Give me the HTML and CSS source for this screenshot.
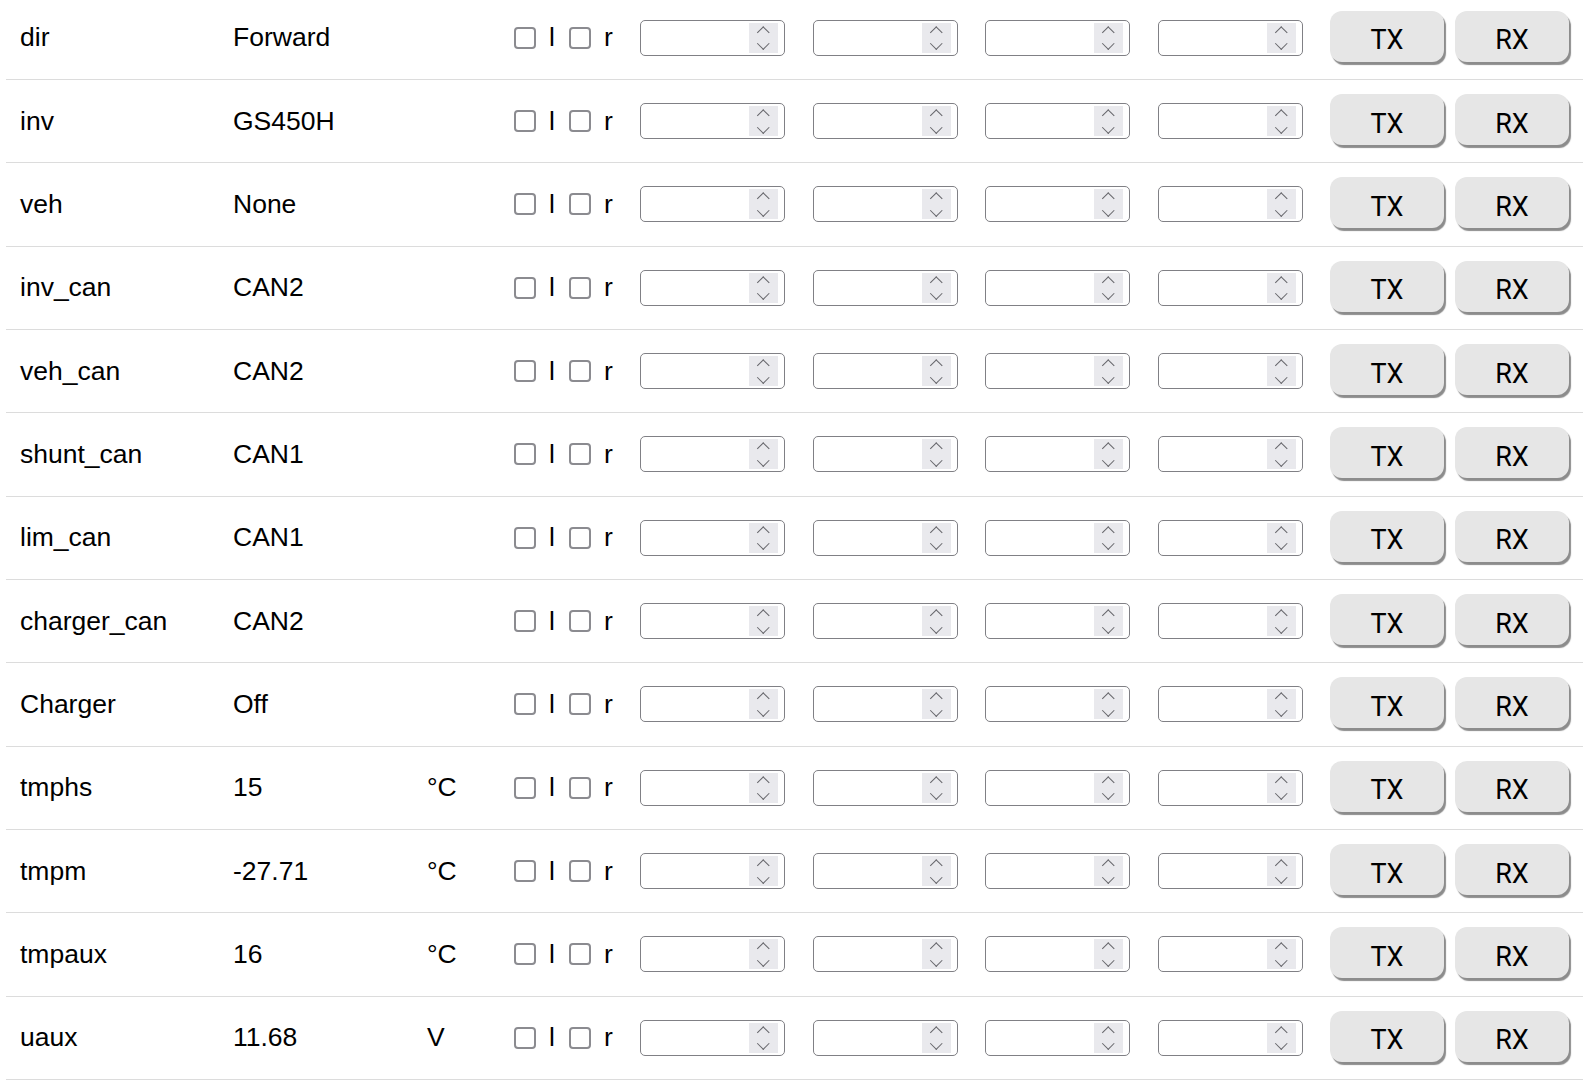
FILE: index.html
```html
<!DOCTYPE html>
<html>
<head>
<meta charset="utf-8">
<link rel="stylesheet" href="styles.css">
</head>
<body>
<div class="table">
  <div class="row"><span class="name">dir</span><span class="value">Forward</span><span class="unit"></span><span class="flags"><input type="checkbox" class="cb"><span class="lab l">l</span><input type="checkbox" class="cb"><span class="lab r">r</span></span><span class="fields"><span class="field"><input class="num"><span class="spin"></span></span><span class="field"><input class="num"><span class="spin"></span></span><span class="field"><input class="num"><span class="spin"></span></span><span class="field"><input class="num"><span class="spin"></span></span></span><span class="btns"><button class="btn">TX</button><button class="btn">RX</button></span></div>
  <div class="row"><span class="name">inv</span><span class="value">GS450H</span><span class="unit"></span><span class="flags"><input type="checkbox" class="cb"><span class="lab l">l</span><input type="checkbox" class="cb"><span class="lab r">r</span></span><span class="fields"><span class="field"><input class="num"><span class="spin"></span></span><span class="field"><input class="num"><span class="spin"></span></span><span class="field"><input class="num"><span class="spin"></span></span><span class="field"><input class="num"><span class="spin"></span></span></span><span class="btns"><button class="btn">TX</button><button class="btn">RX</button></span></div>
  <div class="row"><span class="name">veh</span><span class="value">None</span><span class="unit"></span><span class="flags"><input type="checkbox" class="cb"><span class="lab l">l</span><input type="checkbox" class="cb"><span class="lab r">r</span></span><span class="fields"><span class="field"><input class="num"><span class="spin"></span></span><span class="field"><input class="num"><span class="spin"></span></span><span class="field"><input class="num"><span class="spin"></span></span><span class="field"><input class="num"><span class="spin"></span></span></span><span class="btns"><button class="btn">TX</button><button class="btn">RX</button></span></div>
  <div class="row"><span class="name">inv_can</span><span class="value">CAN2</span><span class="unit"></span><span class="flags"><input type="checkbox" class="cb"><span class="lab l">l</span><input type="checkbox" class="cb"><span class="lab r">r</span></span><span class="fields"><span class="field"><input class="num"><span class="spin"></span></span><span class="field"><input class="num"><span class="spin"></span></span><span class="field"><input class="num"><span class="spin"></span></span><span class="field"><input class="num"><span class="spin"></span></span></span><span class="btns"><button class="btn">TX</button><button class="btn">RX</button></span></div>
  <div class="row"><span class="name">veh_can</span><span class="value">CAN2</span><span class="unit"></span><span class="flags"><input type="checkbox" class="cb"><span class="lab l">l</span><input type="checkbox" class="cb"><span class="lab r">r</span></span><span class="fields"><span class="field"><input class="num"><span class="spin"></span></span><span class="field"><input class="num"><span class="spin"></span></span><span class="field"><input class="num"><span class="spin"></span></span><span class="field"><input class="num"><span class="spin"></span></span></span><span class="btns"><button class="btn">TX</button><button class="btn">RX</button></span></div>
  <div class="row"><span class="name">shunt_can</span><span class="value">CAN1</span><span class="unit"></span><span class="flags"><input type="checkbox" class="cb"><span class="lab l">l</span><input type="checkbox" class="cb"><span class="lab r">r</span></span><span class="fields"><span class="field"><input class="num"><span class="spin"></span></span><span class="field"><input class="num"><span class="spin"></span></span><span class="field"><input class="num"><span class="spin"></span></span><span class="field"><input class="num"><span class="spin"></span></span></span><span class="btns"><button class="btn">TX</button><button class="btn">RX</button></span></div>
  <div class="row"><span class="name">lim_can</span><span class="value">CAN1</span><span class="unit"></span><span class="flags"><input type="checkbox" class="cb"><span class="lab l">l</span><input type="checkbox" class="cb"><span class="lab r">r</span></span><span class="fields"><span class="field"><input class="num"><span class="spin"></span></span><span class="field"><input class="num"><span class="spin"></span></span><span class="field"><input class="num"><span class="spin"></span></span><span class="field"><input class="num"><span class="spin"></span></span></span><span class="btns"><button class="btn">TX</button><button class="btn">RX</button></span></div>
  <div class="row"><span class="name">charger_can</span><span class="value">CAN2</span><span class="unit"></span><span class="flags"><input type="checkbox" class="cb"><span class="lab l">l</span><input type="checkbox" class="cb"><span class="lab r">r</span></span><span class="fields"><span class="field"><input class="num"><span class="spin"></span></span><span class="field"><input class="num"><span class="spin"></span></span><span class="field"><input class="num"><span class="spin"></span></span><span class="field"><input class="num"><span class="spin"></span></span></span><span class="btns"><button class="btn">TX</button><button class="btn">RX</button></span></div>
  <div class="row"><span class="name">Charger</span><span class="value">Off</span><span class="unit"></span><span class="flags"><input type="checkbox" class="cb"><span class="lab l">l</span><input type="checkbox" class="cb"><span class="lab r">r</span></span><span class="fields"><span class="field"><input class="num"><span class="spin"></span></span><span class="field"><input class="num"><span class="spin"></span></span><span class="field"><input class="num"><span class="spin"></span></span><span class="field"><input class="num"><span class="spin"></span></span></span><span class="btns"><button class="btn">TX</button><button class="btn">RX</button></span></div>
  <div class="row"><span class="name">tmphs</span><span class="value">15</span><span class="unit">°C</span><span class="flags"><input type="checkbox" class="cb"><span class="lab l">l</span><input type="checkbox" class="cb"><span class="lab r">r</span></span><span class="fields"><span class="field"><input class="num"><span class="spin"></span></span><span class="field"><input class="num"><span class="spin"></span></span><span class="field"><input class="num"><span class="spin"></span></span><span class="field"><input class="num"><span class="spin"></span></span></span><span class="btns"><button class="btn">TX</button><button class="btn">RX</button></span></div>
  <div class="row"><span class="name">tmpm</span><span class="value">-27.71</span><span class="unit">°C</span><span class="flags"><input type="checkbox" class="cb"><span class="lab l">l</span><input type="checkbox" class="cb"><span class="lab r">r</span></span><span class="fields"><span class="field"><input class="num"><span class="spin"></span></span><span class="field"><input class="num"><span class="spin"></span></span><span class="field"><input class="num"><span class="spin"></span></span><span class="field"><input class="num"><span class="spin"></span></span></span><span class="btns"><button class="btn">TX</button><button class="btn">RX</button></span></div>
  <div class="row"><span class="name">tmpaux</span><span class="value">16</span><span class="unit">°C</span><span class="flags"><input type="checkbox" class="cb"><span class="lab l">l</span><input type="checkbox" class="cb"><span class="lab r">r</span></span><span class="fields"><span class="field"><input class="num"><span class="spin"></span></span><span class="field"><input class="num"><span class="spin"></span></span><span class="field"><input class="num"><span class="spin"></span></span><span class="field"><input class="num"><span class="spin"></span></span></span><span class="btns"><button class="btn">TX</button><button class="btn">RX</button></span></div>
  <div class="row"><span class="name">uaux</span><span class="value">11.68</span><span class="unit">V</span><span class="flags"><input type="checkbox" class="cb"><span class="lab l">l</span><input type="checkbox" class="cb"><span class="lab r">r</span></span><span class="fields"><span class="field"><input class="num"><span class="spin"></span></span><span class="field"><input class="num"><span class="spin"></span></span><span class="field"><input class="num"><span class="spin"></span></span><span class="field"><input class="num"><span class="spin"></span></span></span><span class="btns"><button class="btn">TX</button><button class="btn">RX</button></span></div>
</div>
</body>
</html>
```

FILE: styles.css
```css
html, body {
  margin: 0;
  padding: 0;
  background: #ffffff;
  overflow: hidden;
}

body {
  font-family: "Liberation Sans", Arial, sans-serif;
  font-size: 26.5px;
  color: #000000;
}

.table {
  margin-top: -3.33px;
  margin-left: 6px;
  width: 1577px;
}

.row {
  display: flex;
  align-items: center;
  height: 82.33px;
  border-bottom: 1px solid #dcdcdc;
  padding-left: 14px;
  box-sizing: content-box;
}

.name {
  width: 213px;
  flex: none;
}

.value {
  width: 194px;
  flex: none;
}

.unit {
  width: 87px;
  flex: none;
}

.flags {
  display: flex;
  align-items: center;
  flex: none;
  width: 126px;
}

.cb {
  appearance: none;
  -webkit-appearance: none;
  margin: 0;
  width: 22px;
  height: 22px;
  box-sizing: border-box;
  border: 2.7px solid #8b8b90;
  border-radius: 4px;
  background: #ffffff;
  flex: none;
}

.lab.l {
  margin-left: 13px;
  width: 20px;
}

.lab.r {
  margin-left: 13px;
}

.fields {
  display: flex;
  align-items: center;
  gap: 27.5px;
  flex: none;
}

.field {
  display: flex;
  align-items: center;
  width: 145px;
  height: 36px;
  box-sizing: border-box;
  border: 1px solid #808085;
  border-radius: 5px;
  background: #ffffff;
  padding: 2px 6px 2px 2px;
}

.num {
  flex: 1;
  min-width: 0;
  border: none;
  outline: none;
  background: transparent;
  font: inherit;
  padding: 0;
  height: 100%;
}

.spin {
  flex: none;
  width: 29px;
  height: 30px;
  background: #e9e9ed;
  display: flex;
  flex-direction: column;
  align-items: center;
  justify-content: center;
}

.spin::before,
.spin::after {
  content: "";
  display: block;
  width: 7.5px;
  height: 7.5px;
  border-color: #66666b;
  border-style: solid;
  border-width: 0;
  transform: rotate(45deg);
}

.spin::before {
  border-top-width: 1.8px;
  border-left-width: 1.8px;
  margin-top: 4px;
}

.spin::after {
  border-right-width: 1.8px;
  border-bottom-width: 1.8px;
  margin-top: 3px;
  margin-bottom: 4px;
}

.btns {
  display: flex;
  align-items: center;
  gap: 11px;
  margin-left: 27.5px;
  flex: none;
}

.btn {
  width: 114px;
  height: 51px;
  margin-bottom: 3px;
  border: none;
  border-radius: 12px;
  background: #e6e6e6;
  box-shadow: 2px 3px 1px #8c8c8c;
  font-family: Roboto, "Liberation Sans", sans-serif;
  font-size: 27px;
  color: #000000;
  padding: 8px 0 0 0;
}
```
